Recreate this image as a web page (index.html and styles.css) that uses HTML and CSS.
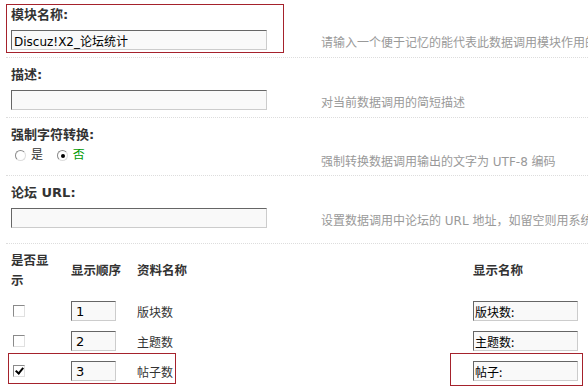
FILE: index.html
```html
<!DOCTYPE html>
<html lang="zh-CN">
<head>
    <meta charset="UTF-8">
    <title>数据调用模块</title>
    <link rel="stylesheet" href="styles.css">
</head>
<body>
<div class="page">
    <div class="item">
        <div class="label">模块名称:</div>
        <div class="field">
            <div class="cell"><input type="text" class="txt" value="Discuz!X2_论坛统计"></div>
            <div class="tip">请输入一个便于记忆的能代表此数据调用模块作用的名称</div>
        </div>
    </div>

    <div class="item">
        <div class="label">描述:</div>
        <div class="field">
            <div class="cell"><input type="text" class="txt" value=""></div>
            <div class="tip">对当前数据调用的简短描述</div>
        </div>
    </div>

    <div class="item item-radio">
        <div class="label">强制字符转换:</div>
        <div class="field field-radio">
            <div class="cell">
                <label class="opt"><input type="radio" name="charset"> 是</label>
                <label class="opt checked"><input type="radio" name="charset" checked> 否</label>
            </div>
            <div class="tip">强制转换数据调用输出的文字为 UTF-8 编码</div>
        </div>
    </div>

    <div class="item item-url">
        <div class="label">论坛 URL:</div>
        <div class="field">
            <div class="cell"><input type="text" class="txt" value=""></div>
            <div class="tip">设置数据调用中论坛的 URL 地址，如留空则用系统默认的 URL 地址</div>
        </div>
    </div>

    <div class="fields">
        <div class="th"><span class="th-show">是否显示</span></div>
        <div class="th">显示顺序</div>
        <div class="th">资料名称</div>
        <div class="th">显示名称</div>

        <div class="td"><input type="checkbox" class="chk"></div>
        <div class="td"><input type="text" class="txt txt-order" value="1"></div>
        <div class="td">版块数</div>
        <div class="td"><input type="text" class="txt txt-name" value="版块数:"></div>

        <div class="td"><input type="checkbox" class="chk"></div>
        <div class="td"><input type="text" class="txt txt-order" value="2"></div>
        <div class="td">主题数</div>
        <div class="td"><input type="text" class="txt txt-name" value="主题数:"></div>

        <div class="td"><input type="checkbox" class="chk" checked></div>
        <div class="td"><input type="text" class="txt txt-order" value="3"></div>
        <div class="td">帖子数</div>
        <div class="td"><input type="text" class="txt txt-name" value="帖子:"></div>
    </div>

    <!-- red highlight boxes drawn over the form -->
    <div class="mark mark-name"></div>
    <div class="mark mark-row"></div>
    <div class="mark mark-title"></div>
</div>
</body>
</html>
```

FILE: styles.css
```css
body {
    margin: 0;
    overflow: hidden;
    background-color: #ffffff;
    font-family: Tahoma, "DejaVu Sans", "Noto Sans CJK SC", sans-serif;
    font-size: 12px;
    color: #333333;
}
.page {
    position: relative;
    width: 588px;
    height: 391px;
    padding-left: 6px;
    box-sizing: border-box;
}
.item {
    padding: 7px 0 7px 5px;
    border-bottom: 1px dotted #dddddd;
}
.item:first-child {
    padding-top: 5px;
}
.item-radio {
    padding-bottom: 10px;
}
.item-url {
    padding-bottom: 15px;
}
.label {
    line-height: 20px;
    font-size: 13px;
    font-weight: bold;
    color: #333333;
}
.field {
    display: grid;
    grid-template-columns: 310px 1fr;
    align-items: center;
    margin-top: 5px;
}
.field-radio {
    margin-top: 0;
    height: 20px;
}
.tip {
    color: #999999;
    white-space: nowrap;
    overflow: hidden;
    padding-top: 2px;
}
.field-radio .tip {
    padding-top: 10px;
}
.txt {
    width: 256px;
    height: 20px;
    box-sizing: border-box;
    margin: 0;
    padding: 1px 2px 0;
    border: 1px solid;
    border-color: #666666 #cccccc #cccccc #666666;
    background-color: #f9f9f9;
    font-family: "DejaVu Sans", "Noto Sans CJK SC", sans-serif;
    font-size: 12px;
    color: #000000;
    outline: none;
}
.txt-order {
    width: 45px;
    font-size: 13px;
    padding-left: 4px;
}
.txt-name {
    width: 105px;
    padding-left: 1px;
    font-family: "Noto Sans CJK SC", sans-serif;
}
.opt {
    display: inline-flex;
    align-items: center;
    margin-right: 6px;
    line-height: 20px;
}
.opt.checked {
    color: #009900;
}
input[type="radio"] {
    appearance: none;
    width: 11px;
    height: 11px;
    margin: 0 5px 0 4px;
    border: 1px solid;
    border-color: #8a8a8a #dddddd #dddddd #8a8a8a;
    border-radius: 50%;
    background-color: #ffffff;
    position: relative;
}
input[type="radio"]:checked::after {
    content: "";
    position: absolute;
    left: 3px;
    top: 3px;
    width: 4px;
    height: 4px;
    border-radius: 50%;
    background-color: #000000;
}
.chk {
    appearance: none;
    width: 12px;
    height: 12px;
    margin: 0 0 0 2px;
    border: 1px solid;
    border-color: #8a8a8a #e0e0e0 #e0e0e0 #8a8a8a;
    background-color: #ffffff;
    position: relative;
}
.chk:checked::after {
    content: "";
    position: absolute;
    left: 3px;
    top: 0;
    width: 3px;
    height: 6px;
    border: solid #000000;
    border-width: 0 2px 2px 0;
    transform: rotate(40deg);
}
.fields {
    display: grid;
    grid-template-columns: 60px 66px 336px 1fr;
    grid-template-rows: 52px repeat(3, 30px);
    padding-left: 5px;
}
.th {
    padding-top: 2px;
    line-height: 20px;
    font-size: 12.5px;
    font-weight: bold;
    color: #333333;
    display: flex;
    align-items: center;
}
.th-show {
    width: 40px;
}
.td {
    display: flex;
    align-items: center;
    color: #333333;
}
.mark {
    position: absolute;
    border: 1px solid #a5222c;
    box-sizing: border-box;
}
.mark-title {
    left: 6px;
    top: 4px;
    width: 278px;
    height: 49px;
}
.mark-row {
    left: 8px;
    top: 353px;
    width: 168px;
    height: 31px;
}
.mark-name {
    left: 450px;
    top: 353px;
    width: 133px;
    height: 33px;
}
```
